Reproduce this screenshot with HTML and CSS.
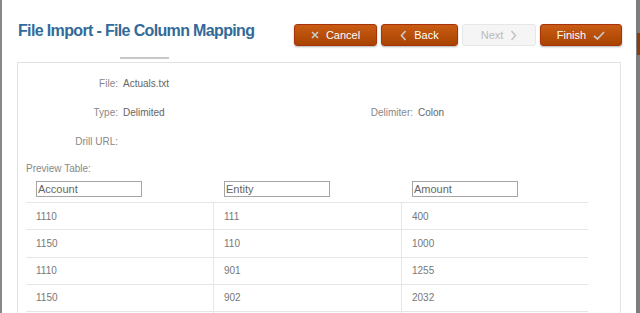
FILE: index.html
```html
<!DOCTYPE html>
<html lang="en">

<head>
  <meta charset="UTF-8">
  <title>File Import - File Column Mapping</title>
  <link rel="stylesheet" href="styles.css">
</head>

<body>
  <div class="page">
    <div class="dialog">
      <div class="dialog-head">
        <div class="head-row">
          <h1 class="dialog-title">File Import - File Column Mapping</h1>
          <div class="actions">
            <button class="btn btn-cancel">
              <svg class="ico" width="8" height="8" viewBox="0 0 8 8"><path d="M1 1L7 7M7 1L1 7" /></svg>Cancel
            </button>
            <button class="btn btn-back">
              <svg class="ico" width="7" height="11" viewBox="0 0 7 11"><path d="M5.5 1L1.5 5.5L5.5 10" /></svg>Back
            </button>
            <button class="btn btn-next" disabled>
              Next<svg class="ico" width="7" height="11" viewBox="0 0 7 11"><path d="M1.5 1L5.5 5.5L1.5 10" /></svg>
            </button>
            <button class="btn btn-finish">
              Finish<svg class="ico" width="12" height="9" viewBox="0 0 12 9"><path d="M1 5L4.5 8L11 1" /></svg>
            </button>
          </div>
        </div>
        <div class="tab-mark"></div>
      </div>

      <div class="panel">
        <div class="fields">
          <span class="lbl">File:</span>
          <span class="val">Actuals.txt</span>
          <span></span>
          <span></span>

          <span class="lbl">Type:</span>
          <span class="val">Delimited</span>
          <span class="lbl">Delimiter:</span>
          <span class="val">Colon</span>

          <span class="lbl">Drill URL:</span>
          <span class="val"></span>
          <span></span>
          <span></span>
        </div>

        <div class="preview-label">Preview Table:</div>

        <div class="preview">
          <div class="head-cell"><input class="col-input" type="text" value="Account"></div>
          <div class="head-cell"><input class="col-input" type="text" value="Entity"></div>
          <div class="head-cell"><input class="col-input" type="text" value="Amount"></div>

          <div class="cell">1110</div>
          <div class="cell">111</div>
          <div class="cell">400</div>

          <div class="cell">1150</div>
          <div class="cell">110</div>
          <div class="cell">1000</div>

          <div class="cell">1110</div>
          <div class="cell">901</div>
          <div class="cell">1255</div>

          <div class="cell">1150</div>
          <div class="cell">902</div>
          <div class="cell">2032</div>

          <div class="cell"></div>
          <div class="cell"></div>
          <div class="cell"></div>
        </div>
      </div>
    </div>

    <div class="backdrop">
      <div class="backdrop-btn"></div>
    </div>
  </div>
</body>

</html>
```

FILE: styles.css
```css
* {
  margin: 0;
  padding: 0;
  box-sizing: border-box;
  font-family: 'Liberation Sans', Arial, sans-serif;
}

html,
body {
  height: 100%;
  overflow: hidden;
}

body {
  background: #8a8a8a;
}

.page {
  display: flex;
  height: 313px;
  padding-left: 2px;
}

.dialog {
  width: 634px;
  height: 313px;
  background: #fff;
  box-shadow: 1px 0 2px rgba(0, 0, 0, 0.25);
  overflow: hidden;
}

.backdrop {
  flex: 1;
  background: #7d7d7d;
}

.backdrop-btn {
  margin-top: 33px;
  margin-left: 1px;
  height: 22px;
  background: #8a3d10;
}

/* header */

.dialog-head {
  padding: 21px 14px 0 16px;
}

.head-row {
  display: flex;
  justify-content: space-between;
  align-items: flex-start;
}

.dialog-title {
  font-size: 16px;
  line-height: 20px;
  font-weight: bold;
  letter-spacing: -0.65px;
  color: #326a99;
}

.actions {
  display: flex;
  gap: 4px;
  margin-top: 3px;
}

.btn {
  display: flex;
  align-items: center;
  justify-content: center;
  gap: 7px;
  height: 22px;
  border: 1px solid #a8330a;
  border-radius: 3px;
  background: linear-gradient(#c95c14, #a84300);
  box-shadow: 0 1px 2px rgba(0, 0, 0, 0.3);
  color: #fff;
  font-size: 11px;
  cursor: pointer;
}

.btn .ico {
  fill: none;
  stroke: #c9c9c9;
  stroke-width: 1.7;
}

.btn-cancel {
  width: 83px;
}

.btn-back {
  width: 77px;
}

.btn-next {
  width: 74px;
  background: #f5f5f5;
  border-color: #e6e6e6;
  box-shadow: none;
  color: #b9b9b9;
  cursor: default;
}

.btn-next .ico {
  stroke: #c6c6c6;
}

.btn-finish {
  width: 82px;
}

.tab-mark {
  width: 49px;
  height: 2px;
  margin: 11px 0 0 102px;
  background: #c8c8c8;
}

/* panel */

.panel {
  margin: 3px 15px 0 15px;
  height: 260px;
  border: 1px solid #e3e3e3;
  border-bottom: none;
  padding-top: 14px;
}

.fields {
  display: grid;
  grid-template-columns: 100px 185px 100px 1fr;
  column-gap: 5px;
  row-gap: 15px;
  font-size: 10px;
  line-height: 14px;
}

.lbl {
  text-align: right;
  color: #888;
}

.val {
  color: #666;
}

.preview-label {
  margin: 13px 0 0 8px;
  font-size: 10px;
  line-height: 14px;
  color: #888;
}

.preview {
  display: grid;
  grid-template-columns: 188px 188px 186px;
  margin-left: 8px;
  width: 562px;
}

.head-cell {
  padding: 5px 0 5px 10px;
  border-bottom: 1px solid #e6e6e6;
}

.col-input {
  display: block;
  width: 106px;
  height: 16px;
  border: 1px solid #a5a5a5;
  padding: 0 1px;
  font-size: 11px;
  color: #666;
  background: #fff;
}

.cell {
  height: 27.25px;
  display: flex;
  align-items: center;
  padding-left: 10px;
  border-bottom: 1px solid #e6e6e6;
  font-size: 10px;
  color: #777;
}

.cell:nth-child(3n+1),
.cell:nth-child(3n+2) {
  border-right: 1px solid #e6e6e6;
}
```
